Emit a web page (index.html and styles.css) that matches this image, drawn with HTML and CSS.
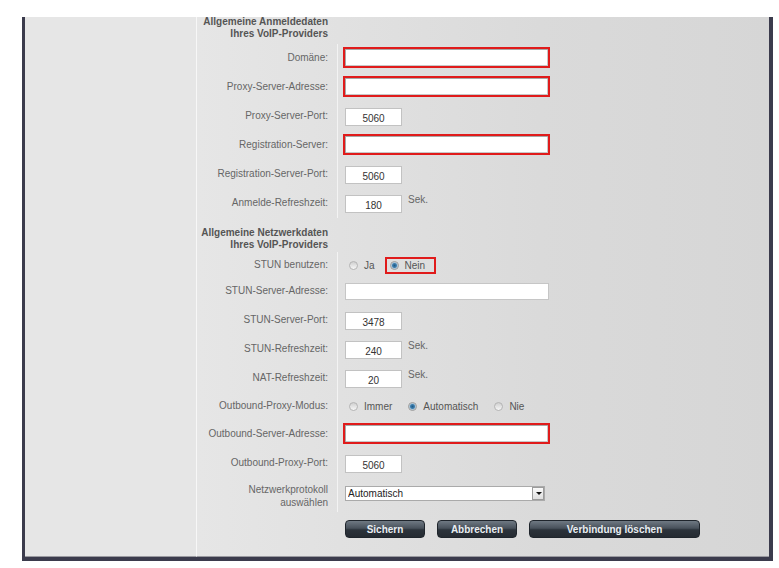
FILE: index.html
```html
<!DOCTYPE html>
<html lang="de">
<head>
  <meta charset="UTF-8">
  <title>Internettelefonie - Anbieter</title>
  <link rel="stylesheet" href="styles.css">
</head>
<body>
  <div class="frame">
    <div class="sidebar"></div>
    <div class="content">
      <div class="section-title first">Allgemeine Anmeldedaten<br>Ihres VoIP-Providers</div>

      <div class="row">
        <div class="label">Domäne:</div>
        <div class="field"><input type="text" class="text required"></div>
      </div>
      <div class="row">
        <div class="label">Proxy-Server-Adresse:</div>
        <div class="field"><input type="text" class="text required"></div>
      </div>
      <div class="row">
        <div class="label">Proxy-Server-Port:</div>
        <div class="field"><input type="text" class="num" value="5060"></div>
      </div>
      <div class="row">
        <div class="label">Registration-Server:</div>
        <div class="field"><input type="text" class="text required"></div>
      </div>
      <div class="row">
        <div class="label">Registration-Server-Port:</div>
        <div class="field"><input type="text" class="num" value="5060"></div>
      </div>
      <div class="row">
        <div class="label">Anmelde-Refreshzeit:</div>
        <div class="field"><input type="text" class="num" value="180"><span class="unit">Sek.</span></div>
      </div>

      <div class="section-title second">Allgemeine Netzwerkdaten<br>Ihres VoIP-Providers</div>

      <div class="row short">
        <div class="label">STUN benutzen:</div>
        <div class="field options">
          <span class="option"><span class="radio"></span>Ja</span>
          <span class="option marked"><span class="radio on"></span>Nein</span>
        </div>
      </div>
      <div class="row">
        <div class="label">STUN-Server-Adresse:</div>
        <div class="field"><input type="text" class="text"></div>
      </div>
      <div class="row">
        <div class="label">STUN-Server-Port:</div>
        <div class="field"><input type="text" class="num" value="3478"></div>
      </div>
      <div class="row">
        <div class="label">STUN-Refreshzeit:</div>
        <div class="field"><input type="text" class="num" value="240"><span class="unit">Sek.</span></div>
      </div>
      <div class="row">
        <div class="label">NAT-Refreshzeit:</div>
        <div class="field"><input type="text" class="num" value="20"><span class="unit">Sek.</span></div>
      </div>
      <div class="row mode">
        <div class="label">Outbound-Proxy-Modus:</div>
        <div class="field options">
          <span class="option"><span class="radio"></span>Immer</span>
          <span class="option"><span class="radio on"></span>Automatisch</span>
          <span class="option"><span class="radio"></span>Nie</span>
        </div>
      </div>
      <div class="row">
        <div class="label">Outbound-Server-Adresse:</div>
        <div class="field"><input type="text" class="text required"></div>
      </div>
      <div class="row">
        <div class="label">Outbound-Proxy-Port:</div>
        <div class="field"><input type="text" class="num" value="5060"></div>
      </div>
      <div class="row tall">
        <div class="label">Netzwerkprotokoll<br>auswählen</div>
        <div class="field">
          <div class="select-wrap">
            <select class="select">
              <option>Automatisch</option>
              <option>UDP</option>
              <option>TCP</option>
            </select>
            <span class="select-arrow"></span>
          </div>
        </div>
      </div>

      <div class="row actions">
        <div></div>
        <div class="buttons">
          <button class="btn small">Sichern</button>
          <button class="btn small">Abbrechen</button>
          <button class="btn wide">Verbindung löschen</button>
        </div>
      </div>
    </div>
  </div>
</body>
</html>
```

FILE: styles.css
```css
* {
  box-sizing: border-box;
}

body {
  margin: 0;
  background: #fff;
  font-family: "Liberation Sans", Arial, sans-serif;
  font-size: 10px;
  color: #666;
  overflow: hidden;
}

.frame {
  display: flex;
  width: 751px;
  height: 544px;
  margin: 17px 0 0 22px;
  border-left: 3px solid #3b3b4c;
  border-right: 4px solid #3b3b4c;
  border-bottom: 4px solid #3b3b4c;
}

.sidebar {
  width: 171px;
  background: #e6e6e6;
  border-bottom: 1px solid #9a9aa0;
}

.content {
  flex: 1;
  overflow: hidden;
  background: linear-gradient(to right, #e6e6e6 0%, #dadada 60%, #d6d6d6 100%);
  border-left: 1px solid #f7f7f7;
  border-bottom: 1px solid #9a9aa0;
}

/* section headings */
.section-title {
  width: 141px;
  padding-right: 10px;
  text-align: right;
  font-weight: bold;
  line-height: 12px;
  color: #555;
}

.section-title.first {
  height: 28px;
  margin-top: -1px;
  padding-top: 0;
}

.section-title.second {
  height: 34px;
  padding-top: 9px;
}

/* form rows */
.row {
  display: grid;
  grid-template-columns: 141px 1fr;
  height: 29px;
}

.row.short {
  height: 25px;
}

.row.mode {
  height: 27px;
}

.row.tall {
  height: 34px;
}

.label {
  border-right: 1px solid #f3f3f3;
  padding: 8px 9px 0 0;
  text-align: right;
  line-height: 12px;
  white-space: nowrap;
}

.row.short .label,
.row.mode .label {
  padding-top: 7px;
}

.row.tall .label {
  padding-top: 5px;
  line-height: 13px;
}

.field {
  display: flex;
  align-items: flex-start;
  padding: 6px 0 0 7px;
}

input {
  font-family: "Liberation Sans", Arial, sans-serif;
  font-size: 10px;
  color: #333;
  outline: none;
}

.text {
  width: 204px;
  height: 17px;
  border: 1px solid #c6c6c6;
  background: #fff;
  padding: 0 3px;
}

.text.required {
  width: 207px;
  height: 21px;
  margin: -3px 0 0 -2px;
  border: 2px solid #e01b1b;
  box-shadow: inset 1px 1px 0 #a8a8a8, inset -1px -1px 0 #c8c8c8;
}

.num {
  width: 57px;
  height: 18px;
  border: 1px solid #c2c2c2;
  background: #fff;
  text-align: center;
  padding: 2px 0 0;
}

.unit {
  margin: -1px 0 0 6px;
  line-height: 12px;
}

/* radio groups */
.options {
  align-items: center;
  padding-top: 0;
  padding-left: 11px;
}

.row.short .options {
  height: 25px;
  padding-top: 1px;
}

.row.mode .options {
  height: 27px;
}

.option {
  display: flex;
  align-items: center;
  margin-right: 16px;
  color: #555;
}

.option.marked {
  height: 17px;
  margin-left: -6px;
  padding: 0 9px 0 3px;
  border: 2px solid #e01b1b;
}

.radio {
  width: 9px;
  height: 9px;
  margin-right: 6px;
  border: 1px solid #b4b4b4;
  border-radius: 50%;
  background: linear-gradient(#d0d0d0, #f7f7f7);
}

.radio.on {
  background: radial-gradient(circle, #1f5a86 0, #3f7fae 2px, #a9c4d8 3px, #ececec 4px);
  border-color: #9a9a9a;
}

/* protocol select */
.select-wrap {
  position: relative;
  width: 200px;
  height: 15px;
  margin-top: 2px;
}

.select {
  appearance: none;
  -webkit-appearance: none;
  width: 200px;
  height: 15px;
  border: 1px solid #aaa;
  border-radius: 0;
  background: #fff;
  padding: 0 0 0 2px;
  font-family: "Liberation Sans", Arial, sans-serif;
  font-size: 10px;
  color: #222;
  line-height: 13px;
}

.select-arrow {
  position: absolute;
  top: 1px;
  right: 1px;
  width: 12px;
  height: 13px;
  border: 1px solid #9c9c9c;
  background: linear-gradient(#fafafa, #dedede);
  pointer-events: none;
}

.select-arrow::after {
  content: "";
  position: absolute;
  left: 3px;
  top: 4px;
  border-left: 3px solid transparent;
  border-right: 3px solid transparent;
  border-top: 3px solid #111;
}

/* buttons */
.row.actions {
  height: 43px;
}

.buttons {
  display: flex;
  gap: 12px;
  padding: 8px 0 0 7px;
}

.btn {
  height: 18px;
  padding: 0;
  border: 1px solid #1f252c;
  border-radius: 4px;
  background: linear-gradient(#6f7983 0%, #48515b 45%, #2c333b 55%, #252b32 100%);
  color: #e9eef2;
  font-family: "Liberation Sans", Arial, sans-serif;
  font-size: 10px;
  font-weight: bold;
  cursor: pointer;
}

.btn.small {
  width: 80px;
}

.btn.wide {
  width: 171px;
}
```
